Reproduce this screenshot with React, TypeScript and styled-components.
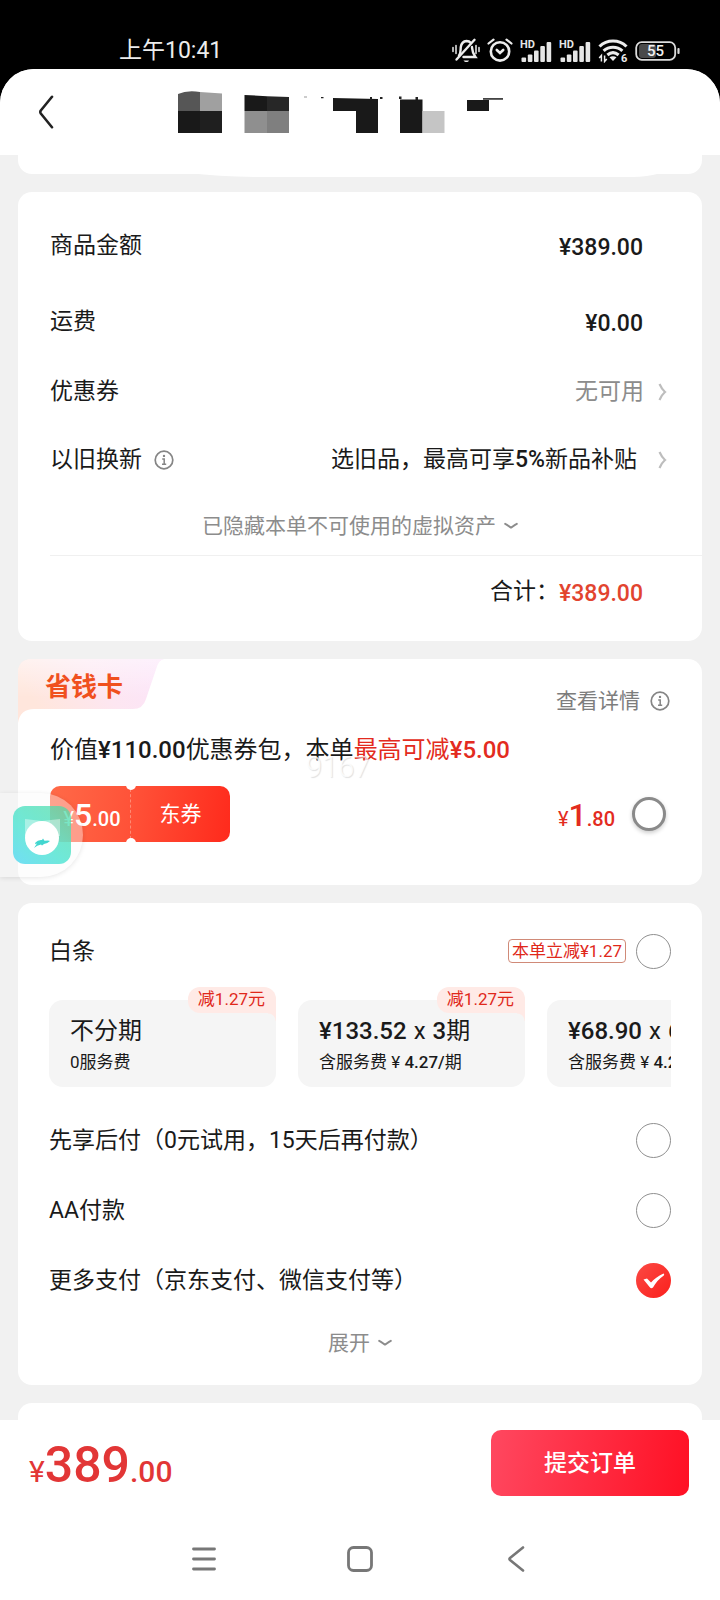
import React, { useState } from "react";
import styled, { createGlobalStyle } from "styled-components";

const GlobalStyle = createGlobalStyle`
  *, *::before, *::after { box-sizing: border-box; }
  body {
    margin: 0;
    background: #fff;
    color: #1a1a1a;
    font-family: Roboto, "Noto Sans CJK SC", sans-serif;
    font-size: 23px;
    line-height: 32px;
  }
  button {
    margin: 0;
    padding: 0;
    border: 0;
    background: none;
    color: inherit;
    font: inherit;
    cursor: pointer;
  }
  svg { display: block; flex: none; }
`;

const Page = styled.div`
  position: relative;
  display: flex;
  flex-direction: column;
  min-height: 100vh;
  overflow: hidden;
  background: #000;
`;

const StatusBar = styled.div`
  display: flex;
  align-items: center;
  justify-content: space-between;
  height: 69px;
  padding: 32px 40px 0 119px;
  color: #ededed;
`;

const StatusIcons = styled.div`
  display: flex;
  align-items: center;
  gap: 7px;
`;

const Sheet = styled.div`
  flex: 1;
  display: flex;
  flex-direction: column;
  border-radius: 34px 34px 0 0;
  overflow: hidden;
  background: #f1f1f1;
`;

const Header = styled.header`
  display: grid;
  grid-template-columns: 60px 1fr 60px;
  align-items: start;
  justify-items: center;
  height: 86px;
  padding-top: 21px;
  background: #fff;
`;

const BackButton = styled.button`
  display: grid;
  place-items: center;
  width: 60px;
  height: 44px;
  padding-left: 32px;
`;

const Content = styled.main`
  flex: 1;
  display: flex;
  flex-direction: column;
  gap: 18px;
  padding: 0 18px;
`;

const Card = styled.section`
  position: relative;
  border-radius: 14px;
  background: #fff;
`;

const CardEnd = styled(Card)`
  height: 19px;
  border-radius: 0 0 14px 14px;
`;

const SagShape = styled.svg`
  position: absolute;
  left: 25%;
  top: 18px;
  width: 69%;
  height: 4px;
`;

const CardStart = styled(Card)`
  flex: 1;
  min-height: 17px;
  border-radius: 14px 14px 0 0;
`;

const PriceCard = styled(Card)`
  padding: 14px 0 13px 32px;
`;

const Row = styled.div<{ $tall?: boolean }>`
  display: flex;
  align-items: center;
  justify-content: space-between;
  height: ${(p) => (p.$tall ? 76 : 68)}px;
  padding: ${(p) => (p.$tall ? 4 : 0)}px 35px 0 0;
`;

const RowLabel = styled.span`
  display: flex;
  align-items: center;
  gap: 12px;
`;

const Money = styled.span<{ $red?: boolean }>`
  padding: 4px 24px 0 0;
  font-weight: 500;
  color: ${(p) => (p.$red ? "#e2442f" : "#1a1a1a")};
`;

const RowButton = styled.button<{ $muted?: boolean }>`
  display: flex;
  align-items: center;
  gap: ${(p) => (p.$muted ? 14 : 21)}px;
  color: ${(p) => (p.$muted ? "#8c8c8c" : "#1a1a1a")};
  b { font-weight: 500; }
`;

const IconButton = styled.button`
  display: block;
`;

const FoldButton = styled.button<{ $height: number }>`
  display: flex;
  align-items: center;
  justify-content: center;
  gap: 8px;
  width: 100%;
  height: ${(p) => p.$height}px;
  color: #8c8c8c;
  font-size: 21px;
`;

const FoldArea = styled.div`
  padding: 2px 32px 0 0;
  border-bottom: 1px solid #f0f0f0;
`;

const TotalRow = styled.div`
  display: flex;
  align-items: center;
  justify-content: flex-end;
  height: 72px;
  padding-right: 35px;
`;

const SavingsCard = styled(Card)`
  padding: 0 32px 43px;
`;

const SavingsHead = styled.div`
  display: flex;
  justify-content: space-between;
  height: 66px;
  margin-left: -32px;
`;

const SavingsTag = styled.h2`
  position: relative;
  width: 146px;
  height: 66px;
  margin: 0;
  padding: 10px 0 0 27px;
  color: #f0501e;
  font-size: 26px;
  font-weight: 700;
  line-height: 36px;
  svg { position: absolute; left: 0; top: 0; }
  span { position: relative; }
`;

const DetailsLink = styled.a`
  display: flex;
  align-items: center;
  gap: 10px;
  height: 32px;
  margin-top: 26px;
  color: #7d7d7d;
  font-size: 21px;
  text-decoration: none;
`;

const SavingsTitle = styled.p`
  margin: 0;
  padding-top: 1px;
  font-size: 24px;
  line-height: 48px;
  b { font-weight: 500; }
`;

const RedText = styled.span`
  color: #e32b20;
`;

const SavingsBody = styled.div`
  display: flex;
  align-items: center;
  justify-content: space-between;
  margin-top: 12px;
`;

const Coupon = styled.div`
  position: relative;
  display: grid;
  grid-template-columns: 81px 99px;
  align-items: center;
  height: 56px;
  border-radius: 10px;
  background: linear-gradient(100deg, #ff6a48, #ff5238 45%, #ff2a1c);
  color: #fff;
  font-size: 21px;
  text-align: center;
  &::before, &::after {
    content: "";
    position: absolute;
    left: 76px;
    width: 10px;
    height: 10px;
    border-radius: 50%;
    background: #fff;
  }
  &::before { top: -6px; }
  &::after { bottom: -6px; }
`;

const CouponValue = styled.span`
  padding-left: 4px;
  border-right: 1px dashed #ff8a74;
`;

const Amount = styled.span<{ $large?: boolean }>`
  display: inline-block;
  padding-top: ${(p) => (p.$large ? 10 : 6)}px;
  font-size: ${(p) => (p.$large ? 30 : 20)}px;
  line-height: 40px;
  font-weight: 500;
  strong {
    font-size: ${(p) => (p.$large ? 50 : 32)}px;
    font-weight: 500;
  }
`;

const Currency = styled.span`
  font-weight: 400;
`;

const CardPrice = styled.label`
  display: flex;
  align-items: center;
  gap: 17px;
  margin-right: 4px;
  color: #e32b20;
`;

const Radio = styled.input<{ $heavy?: boolean }>`
  appearance: none;
  flex: none;
  width: ${(p) => (p.$heavy ? 34 : 35)}px;
  height: ${(p) => (p.$heavy ? 34 : 35)}px;
  margin: 0;
  border: ${(p) => (p.$heavy ? "3px solid #8a8a8a" : "1px solid #8f8f8f")};
  border-radius: 50%;
  background: #fff;
  box-shadow: ${(p) => (p.$heavy ? "0 2px 4px rgba(0,0,0,.2)" : "none")};
  cursor: pointer;
  &:checked {
    border: 0;
    background:
      url("data:image/svg+xml,%3Csvg xmlns='http://www.w3.org/2000/svg' viewBox='0 0 35 35'%3E%3Cpath d='M7.5 16.5 L11 15.6 L15 19.5 C18 16 22 13 27.5 10.5 C28.5 11 28.3 12 27.5 12.8 C23 16 19.5 20 17 24.5 C15.8 25.6 14.6 25.4 13.8 24.3 Z' fill='white'/%3E%3C/svg%3E") center / 100% no-repeat,
      linear-gradient(135deg, #fb4a44, #fb1f1c);
  }
`;

const PayCard = styled(Card)`
  padding: 14px 31px 14px 31px;
`;

const PayRow = styled.label<{ $height: number }>`
  display: flex;
  align-items: center;
  height: ${(p) => p.$height}px;
  cursor: pointer;
`;

const PayName = styled.span`
  flex: 1;
  padding-top: 2px;
`;

const PromoTag = styled.span`
  margin-right: 10px;
  padding: 0 3px;
  border: 1px solid #d08a78;
  border-radius: 4px;
  color: #e0281a;
  font-size: 17px;
  line-height: 22px;
`;

const Plans = styled.div`
  display: flex;
  gap: 22px;
  padding: 15px 0 18px;
  overflow: hidden;
`;

const Plan = styled.button`
  position: relative;
  flex: none;
  width: 227px;
  height: 87px;
  padding: 4px 21px 0;
  border-radius: 14px;
  background: #f5f5f5;
  text-align: left;
`;

const PlanTitle = styled.span`
  display: block;
  font-size: 24px;
  line-height: 32px;
  white-space: nowrap;
  b { font-weight: 500; }
`;

const Times = styled.span`
  padding: 0 7px;
`;

const PlanNote = styled.span`
  display: block;
  font-size: 17px;
  line-height: 30px;
  white-space: nowrap;
  b { font-weight: 500; }
`;

const PlanBadge = styled.span`
  position: absolute;
  right: 0;
  top: -13px;
  padding: 1px 11px 2px 10px;
  border-radius: 12px 12px 0 12px;
  background: #ffeae6;
  color: #e0281a;
  font-size: 17px;
  line-height: 23px;
  &::after {
    content: "";
    position: absolute;
    right: 0;
    top: 26px;
    width: 8px;
    height: 8px;
    background: radial-gradient(circle at 0 100%, transparent 7px, #ffeae6 8px);
  }
`;

const SubmitBar = styled.footer`
  display: flex;
  align-items: center;
  justify-content: space-between;
  height: 86px;
  padding: 0 31px 0 29px;
  background: #fff;
  color: #e23636;
`;

const SubmitButton = styled.button`
  width: 198px;
  height: 66px;
  padding-top: 2px;
  border-radius: 10px;
  background: linear-gradient(100deg, #ff4860, #ff1024);
  color: #fff;
  font-weight: 500;
`;

const SystemNav = styled.nav`
  display: flex;
  justify-content: center;
  gap: 116px;
  height: 94px;
  padding-top: 33px;
  background: #fff;
`;

const NavButton = styled.button`
  display: grid;
  place-items: center;
  width: 40px;
  height: 40px;
`;

const FloatingBall = styled.div`
  position: absolute;
  left: 0;
  top: 793px;
  width: 83px;
  height: 84px;
  padding: 13px;
  border-radius: 0 42px 42px 0;
  background: rgba(250, 250, 250, 0.4);
  box-shadow: 0 1px 5px rgba(0, 0, 0, 0.1);
`;

const Watermark = styled.span`
  position: absolute;
  left: 306px;
  top: 748px;
  color: rgba(255, 255, 255, 0.8);
  font-size: 29px;
  font-weight: 300;
  line-height: 38px;
  text-shadow: 1px 1px 1px rgba(0, 0, 0, 0.12);
`;

const InfoIcon = () => (
  <svg width="20" height="20" viewBox="0 0 20 20" fill="none" stroke="#858585">
    <circle cx="10" cy="10" r="8.8" strokeWidth="1.7" />
    <circle cx="10" cy="5.9" r="1.2" fill="#858585" stroke="none" />
    <path d="M8.2 8.9h2v5.2M8 14.3h4.2" strokeWidth="1.5" />
  </svg>
);

const Chevron = () => (
  <svg width="9" height="18" viewBox="0 0 9 18" fill="none" stroke="#bdbdbd" strokeWidth="2.2">
    <path d="M1.5 1 Q4 6.5 7 9 Q4 11.5 1.5 17" />
  </svg>
);

const DownIcon = () => (
  <svg width="14" height="8" viewBox="0 0 14 8" fill="none" stroke="#8c8c8c" strokeWidth="2" strokeLinecap="round">
    <path d="M1.2 1.8 C4 3 5.5 5 7 5.6 C8.5 5 10 3 12.8 1.8" />
  </svg>
);

const MutedBell = () => (
  <svg width="28" height="25" viewBox="0 0 28 25" fill="none" stroke="#ededed" strokeWidth="2.4" strokeLinecap="round">
    <path d="M7 17.5 C9 15 8.4 12 8.8 9 C9.4 5.2 11.5 3.2 14.5 3 C16.5 3 18 3.8 19 5" />
    <path d="M20 9 C20.3 12 20 14.5 23.4 19 H11.5" />
    <path d="M4.5 21.5 L22.5 1.8" />
    <path d="M11.5 22.5 C13 24.6 16 24.6 17 22.5 Z" fill="#ededed" stroke="none" />
    <path d="M1 9.5v4M4 7.5v8M24 7.5v8M27 9.5v4" strokeWidth="1.5" />
  </svg>
);

const Alarm = () => (
  <svg width="26" height="25" viewBox="0 0 26 25" fill="none" stroke="#ededed" strokeLinecap="round">
    <circle cx="13" cy="13.4" r="9.2" strokeWidth="2.6" />
    <path d="M9.8 12 L13 15 L16.2 12" strokeWidth="2.6" />
    <path d="M1.5 5.5 L6.5 1.6 M24.5 5.5 L19.5 1.6" strokeWidth="2.2" />
  </svg>
);

const Signal = () => (
  <svg width="32" height="24" viewBox="0 0 32 24" fill="#e6e6e6">
    <text x="0" y="8.5" fontSize="11" fontWeight="700" fontFamily="Roboto, sans-serif">HD</text>
    <rect x="1.5" y="18.5" width="4.6" height="4.5" rx="1" />
    <rect x="7.8" y="15.5" width="4.6" height="7.5" rx="1" />
    <rect x="14" y="11.5" width="4.6" height="11.500" rx="1" />
    <rect x="20.3" y="7" width="4.6" height="16" rx="1" />
    <rect x="26.6" y="3" width="4.6" height="20" rx="1" />
  </svg>
);

const Wifi = () => (
  <svg width="30" height="25" viewBox="0 0 30 25" fill="none" stroke="#ededed" strokeWidth="3.1">
    <path d="M1.5 8.5 C9 1.2 21 1.2 28.5 8.5" />
    <path d="M5.6 12.8 C11 8 19 8 24.4 12.8" />
    <path d="M9.4 17 C13 14 17 14 20.6 17" />
    <path d="M11.5 19.2 C13.5 17.8 16.5 17.8 18.5 19.2 L15 23 Z" fill="#ededed" stroke="none" />
    <path d="M3.4 23.5v-6l-2.2 2.4M6.6 17.5v6l2.2-2.4" strokeWidth="1.5" />
    <text x="23" y="23.5" fontSize="11" fontWeight="700" fill="#ededed" stroke="none" fontFamily="Roboto, sans-serif">6</text>
  </svg>
);

const Battery = () => (
  <svg width="45" height="20" viewBox="0 0 45 20">
    <rect x="4" y="3" width="17" height="14" rx="3" fill="#4a4a4a" />
    <rect x="1.2" y="1.2" width="39" height="17.6" rx="5.5" fill="none" stroke="#dcdcdc" strokeWidth="1.8" />
    <rect x="42.4" y="7" width="2.2" height="6" rx="1" fill="#dcdcdc" />
    <text x="20.5" y="15.4" textAnchor="middle" fontSize="15" fontWeight="500" fill="#f2f2f2" fontFamily="Roboto, sans-serif">55</text>
  </svg>
);

const MosaicTitle = () => (
  <svg width="380" height="46" viewBox="170 90 380 46" aria-hidden="true">
    <path d="M178 94 Q187 90 200 92 V111 H178Z" fill="#565656" />
    <path d="M200 92 L222 93.5 V111 H200Z" fill="#a0a0a0" />
    <rect x="178" y="111" width="22" height="22" fill="#191919" />
    <rect x="200" y="111" width="22" height="22" fill="#1f1f1f" />
    <path d="M244.500 95 L267 96.200 V111 H244.500Z" fill="#191919" />
    <path d="M267 96.200 L289 97 V111 H267Z" fill="#272727" />
    <rect x="244.500" y="111" width="22.500" height="22" fill="#8f8f8f" />
    <rect x="267" y="111" width="22" height="22" fill="#7f7f7f" />
    <path d="M304 96.500h3v1h-3z" fill="#999" />
    <path d="M321 97h2.500v1.200H321z" fill="#222" />
    <path d="M333 98 L378 99 V133 H356 V111 H333Z" fill="#191919" />
    <path d="M370 97h2v3h-2zM380 97h2.500v2H380zM399 96.500h2.500v2.500H399zM415.500 97h2.500v3h-2.500z" fill="#222" />
    <rect x="400" y="99.500" width="22.500" height="33.500" fill="#191919" />
    <rect x="422.500" y="111" width="22" height="22" fill="#c5c5c5" />
    <rect x="467" y="100" width="22" height="11" fill="#191919" />
    <rect x="483" y="98" width="20" height="1.800" fill="#444" />
  </svg>
);

const PLANS = [
  { title: <>不分期</>, note: <>0服务费</>, badge: "减1.27元" },
  { title: <><b>¥133.52</b><Times>x</Times><b>3</b>期</>, note: <>含服务费 ¥ <b>4.27/</b>期</>, badge: "减1.27元" },
  { title: <><b>¥68.90</b><Times>x</Times><b>6</b>期</>, note: <>含服务费 ¥ <b>4.27/</b>期</>, badge: "" },
];

const METHODS = [
  { id: "later", name: "先享后付（0元试用，15天后再付款）" },
  { id: "aa", name: "AA付款" },
  { id: "more", name: "更多支付（京东支付、微信支付等）" },
];

export default function App() {
  const [method, setMethod] = useState("more");
  return (
    <>
      <GlobalStyle />
      <Page>
        <StatusBar>
          <span>上午10:41</span>
          <StatusIcons>
            <MutedBell />
            <Alarm />
            <Signal />
            <Signal />
            <Wifi />
            <Battery />
          </StatusIcons>
        </StatusBar>

        <Sheet>
          <Header>
            <BackButton aria-label="返回">
              <svg width="16" height="34" viewBox="0 0 16 34" fill="none" stroke="#222" strokeWidth="2.6" strokeLinecap="round" strokeLinejoin="round">
                <path d="M14 1.800 L2.800 15.500 Q1.800 17 2.800 18.500 L14 32.200" />
              </svg>
            </BackButton>
            <MosaicTitle />
          </Header>

          <Content>
            <CardEnd>
              <SagShape viewBox="0 0 500 4" preserveAspectRatio="none">
                <path d="M0 0 Q30 3.500 70 4 H470 Q485 4 500 0Z" fill="#fff" />
              </SagShape>
            </CardEnd>

            <PriceCard>
              <Row $tall>
                <span>商品金额</span>
                <Money>¥389.00</Money>
              </Row>
              <Row $tall>
                <span>运费</span>
                <Money>¥0.00</Money>
              </Row>
              <Row>
                <span>优惠券</span>
                <RowButton $muted>
                  无可用
                  <Chevron />
                </RowButton>
              </Row>
              <Row>
                <RowLabel>
                  以旧换新
                  <IconButton aria-label="以旧换新说明">
                    <InfoIcon />
                  </IconButton>
                </RowLabel>
                <RowButton>
                  <span>选旧品，最高可享<b>5%</b>新品补贴</span>
                  <Chevron />
                </RowButton>
              </Row>
              <FoldArea>
                <FoldButton $height={59}>
                  已隐藏本单不可使用的虚拟资产
                  <DownIcon />
                </FoldButton>
              </FoldArea>
              <TotalRow>
                <span>合计：</span>
                <Money $red>¥389.00</Money>
              </TotalRow>
            </PriceCard>

            <SavingsCard>
              <SavingsHead>
                <SavingsTag>
                  <svg width="146" height="66" viewBox="0 0 146 66">
                    <defs>
                      <linearGradient id="tagFill" x1="0" y1="0.3" x2="1" y2="0">
                        <stop offset="0" stopColor="#ffe6dc" />
                        <stop offset="0.5" stopColor="#fde6f1" />
                        <stop offset="1" stopColor="#fbe3fb" />
                      </linearGradient>
                      <linearGradient id="tagFade" x1="0" y1="0" x2="0" y2="1">
                        <stop offset="0" stopColor="#fff" stopOpacity="0.5" />
                        <stop offset="0.6" stopColor="#fff" stopOpacity="0" />
                      </linearGradient>
                    </defs>
                    <path d="M0 14 Q0 0 14 0 H146 Q141 1 139 7 L128 40 Q125 50 115 50 H16 Q2 50 0 64Z" fill="url(#tagFill)" />
                    <path d="M0 14 Q0 0 14 0 H146 Q141 1 139 7 L128 40 Q125 50 115 50 H16 Q2 50 0 64Z" fill="url(#tagFade)" />
                  </svg>
                  <span>省钱卡</span>
                </SavingsTag>
                <DetailsLink href="#details">
                  查看详情
                  <InfoIcon />
                </DetailsLink>
              </SavingsHead>
              <SavingsTitle>
                价值<b>¥110.00</b>优惠券包，本单<RedText>最高可减<b>¥5.00</b></RedText>
              </SavingsTitle>
              <SavingsBody>
                <Coupon>
                  <CouponValue>
                    <Amount><Currency>¥</Currency><strong>5</strong>.00</Amount>
                  </CouponValue>
                  <span>东券</span>
                </Coupon>
                <CardPrice>
                  <Amount><Currency>¥</Currency><strong>1</strong>.80</Amount>
                  <Radio type="radio" name="savings" $heavy aria-label="购买省钱卡" />
                </CardPrice>
              </SavingsBody>
            </SavingsCard>

            <PayCard>
              <PayRow $height={68}>
                <PayName>白条</PayName>
                <PromoTag>本单立减¥1.27</PromoTag>
                <Radio type="radio" name="pay" checked={method === "baitiao"} onChange={() => setMethod("baitiao")} />
              </PayRow>
              <Plans>
                {PLANS.map((plan, i) => (
                  <Plan key={i}>
                    <PlanTitle>{plan.title}</PlanTitle>
                    <PlanNote>{plan.note}</PlanNote>
                    {plan.badge && <PlanBadge>{plan.badge}</PlanBadge>}
                  </Plan>
                ))}
              </Plans>
              {METHODS.map((m) => (
                <PayRow key={m.id} $height={70}>
                  <PayName>{m.name}</PayName>
                  <Radio type="radio" name="pay" checked={method === m.id} onChange={() => setMethod(m.id)} />
                </PayRow>
              ))}
              <FoldButton $height={56}>
                展开
                <DownIcon />
              </FoldButton>
            </PayCard>

            <CardStart />
          </Content>

          <SubmitBar>
            <Amount $large><Currency>¥</Currency><strong>389</strong>.00</Amount>
            <SubmitButton>提交订单</SubmitButton>
          </SubmitBar>

          <SystemNav>
            <NavButton aria-label="最近任务">
              <svg width="26" height="26" viewBox="0 0 26 26" stroke="#777" strokeWidth="2.8" strokeLinecap="round">
                <path d="M2.500 3h21M2.500 13h21M2.500 23h21" />
              </svg>
            </NavButton>
            <NavButton aria-label="主屏幕">
              <svg width="26" height="26" viewBox="0 0 26 26" fill="none" stroke="#777" strokeWidth="2.8">
                <rect x="1.500" y="1.500" width="23" height="23" rx="5" />
              </svg>
            </NavButton>
            <NavButton aria-label="返回上一级">
              <svg width="18" height="26" viewBox="0 0 18 26" fill="none" stroke="#777" strokeWidth="2.6" strokeLinecap="round" strokeLinejoin="round">
                <path d="M16 1.500 L3 12 Q2 13 3 14 L16 24.500" />
              </svg>
            </NavButton>
          </SystemNav>
        </Sheet>

        <Watermark>9167</Watermark>
        <FloatingBall>
          <svg width="58" height="58" viewBox="0 0 58 58">
            <defs>
              <linearGradient id="ball" x1="0" y1="1" x2="0.8" y2="0">
                <stop offset="0" stopColor="#6adcf5" stopOpacity="0.95" />
                <stop offset="0.45" stopColor="#5fe6d6" stopOpacity="0.9" />
                <stop offset="1" stopColor="#46dca8" stopOpacity="0.7" />
              </linearGradient>
            </defs>
            <rect width="58" height="58" rx="12" fill="url(#ball)" />
            <path d="M12 13 L29 15 L47 13 V30 H12Z" fill="#fff" opacity="0.4" />
            <circle cx="29" cy="32" r="17" fill="#fff" />
            <path d="M21 42 L24 37.500 L22 38.200 L22.500 36.500 Q25 33.500 29 34 L30 32.500 L31.500 34.800 L35 34.500 L37 35 Q34 38 31 38 L29 39.500 L28 38.500 Q24 39 21 42Z" fill="#42d6cf" />
          </svg>
        </FloatingBall>
      </Page>
    </>
  );
}
